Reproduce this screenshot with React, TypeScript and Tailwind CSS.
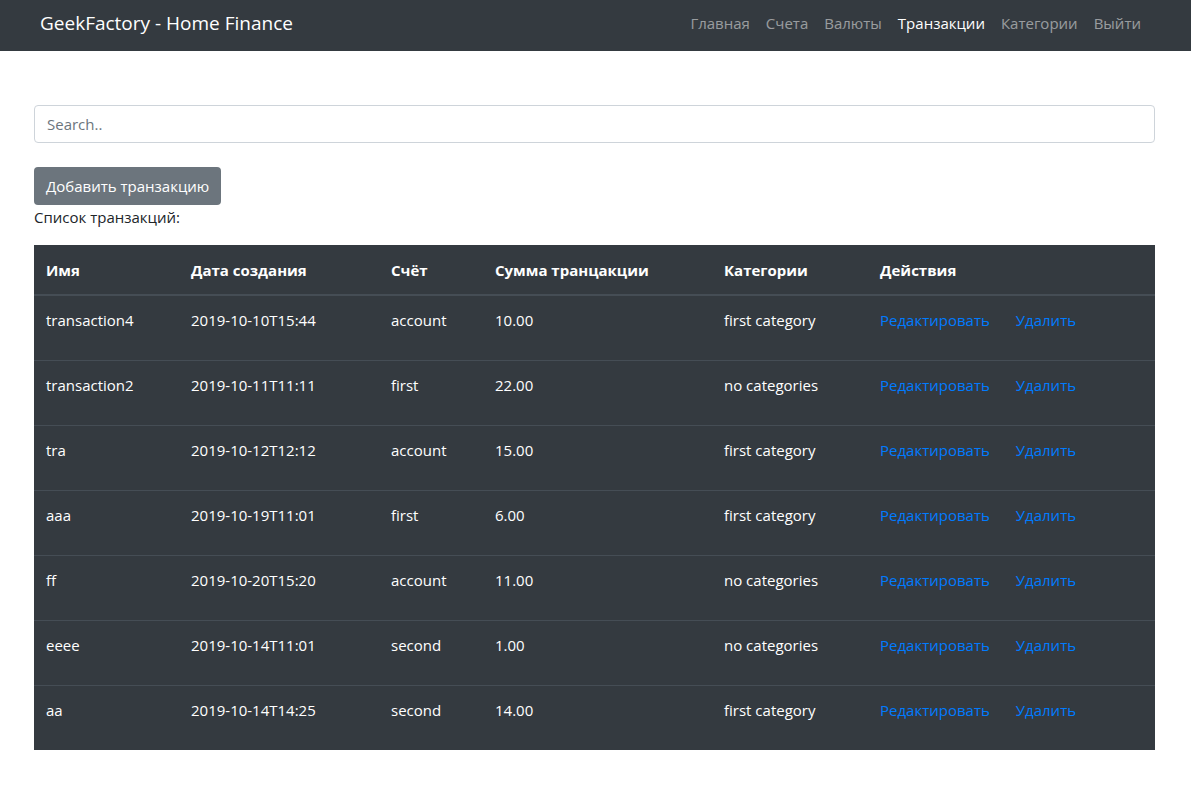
import { FC } from "react";

interface Transaction {
     name: string;
     date: string;
     account: string;
     amount: string;
     category: string;
}

const transactions: Transaction[] = [
     { name: "transaction4", date: "2019-10-10T15:44", account: "account", amount: "10.00", category: "first category" },
     { name: "transaction2", date: "2019-10-11T11:11", account: "first", amount: "22.00", category: "no categories" },
     { name: "tra", date: "2019-10-12T12:12", account: "account", amount: "15.00", category: "first category" },
     { name: "aaa", date: "2019-10-19T11:01", account: "first", amount: "6.00", category: "first category" },
     { name: "ff", date: "2019-10-20T15:20", account: "account", amount: "11.00", category: "no categories" },
     { name: "eeee", date: "2019-10-14T11:01", account: "second", amount: "1.00", category: "no categories" },
     { name: "aa", date: "2019-10-14T14:25", account: "second", amount: "14.00", category: "first category" },
];

const navLinks = ["Главная", "Счета", "Валюты", "Транзакции", "Категории", "Выйти"];

const Navbar: FC = () => {
     return (
          <nav className="h-[51px] bg-[#343a40] flex items-center justify-between pl-[40px] pr-[42px] pb-[5px]">
               <span className="text-[19px] text-white">GeekFactory - Home Finance</span>
               <ul className="flex">
                    {navLinks.map((link) => (
                         <li
                              key={link}
                              className={
                                   link === "Транзакции"
                                        ? "px-2 text-white"
                                        : "px-2 text-white/50"
                              }>
                              {link}
                         </li>
                    ))}
               </ul>
          </nav>
     );
};

const App: FC = () => {
     return (
          <div className="min-h-screen bg-white text-[15px] text-[#212529] font-['Open_Sans',sans-serif] leading-6">
               <Navbar />
               <div className="px-[34px] pt-[54px]">
                    <input
                         type="text"
                         placeholder="Search.."
                         className="w-[1121px] h-[38px] border border-[#ced4da] rounded px-3 text-[15px] placeholder:text-[#6c757d] outline-none"
                    />
                    <button className="mt-6 h-[38px] px-3 rounded bg-[#6c757d] text-white text-[15px]">
                         Добавить транзакцию
                    </button>
                    <div className="mb-[16px]">Список транзакций:</div>
                    <table className="w-[1121px] bg-[#343a40] text-white border-collapse table-fixed">
                         <colgroup>
                              <col className="w-[145px]" />
                              <col className="w-[200px]" />
                              <col className="w-[104px]" />
                              <col className="w-[229px]" />
                              <col className="w-[156px]" />
                              <col />
                         </colgroup>
                         <thead>
                              <tr className="h-[50px] border-b-2 border-[#454d55]">
                                   <th className="px-3 text-left font-bold">Имя</th>
                                   <th className="px-3 text-left font-bold">Дата создания</th>
                                   <th className="px-3 text-left font-bold">Счёт</th>
                                   <th className="px-3 text-left font-bold">Сумма транцакции</th>
                                   <th className="px-3 text-left font-bold">Категории</th>
                                   <th className="px-3 text-left font-bold">Действия</th>
                              </tr>
                         </thead>
                         <tbody>
                              {transactions.map((t, i) => (
                                   <tr
                                        key={t.name + t.date}
                                        className={
                                             i === 0
                                                  ? "h-[65px] align-top"
                                                  : "h-[65px] align-top border-t border-[#454d55]"
                                        }>
                                        <td className="px-3 pt-3">{t.name}</td>
                                        <td className="px-3 pt-3">{t.date}</td>
                                        <td className="px-3 pt-3">{t.account}</td>
                                        <td className="px-3 pt-3">{t.amount}</td>
                                        <td className="px-3 pt-3">{t.category}</td>
                                        <td className="px-3 pt-3">
                                             <div className="flex gap-[26px] text-[#007bff]">
                                                  <span>Редактировать</span>
                                                  <span>Удалить</span>
                                             </div>
                                        </td>
                                   </tr>
                              ))}
                         </tbody>
                    </table>
               </div>
          </div>
     );
};

export default App;
